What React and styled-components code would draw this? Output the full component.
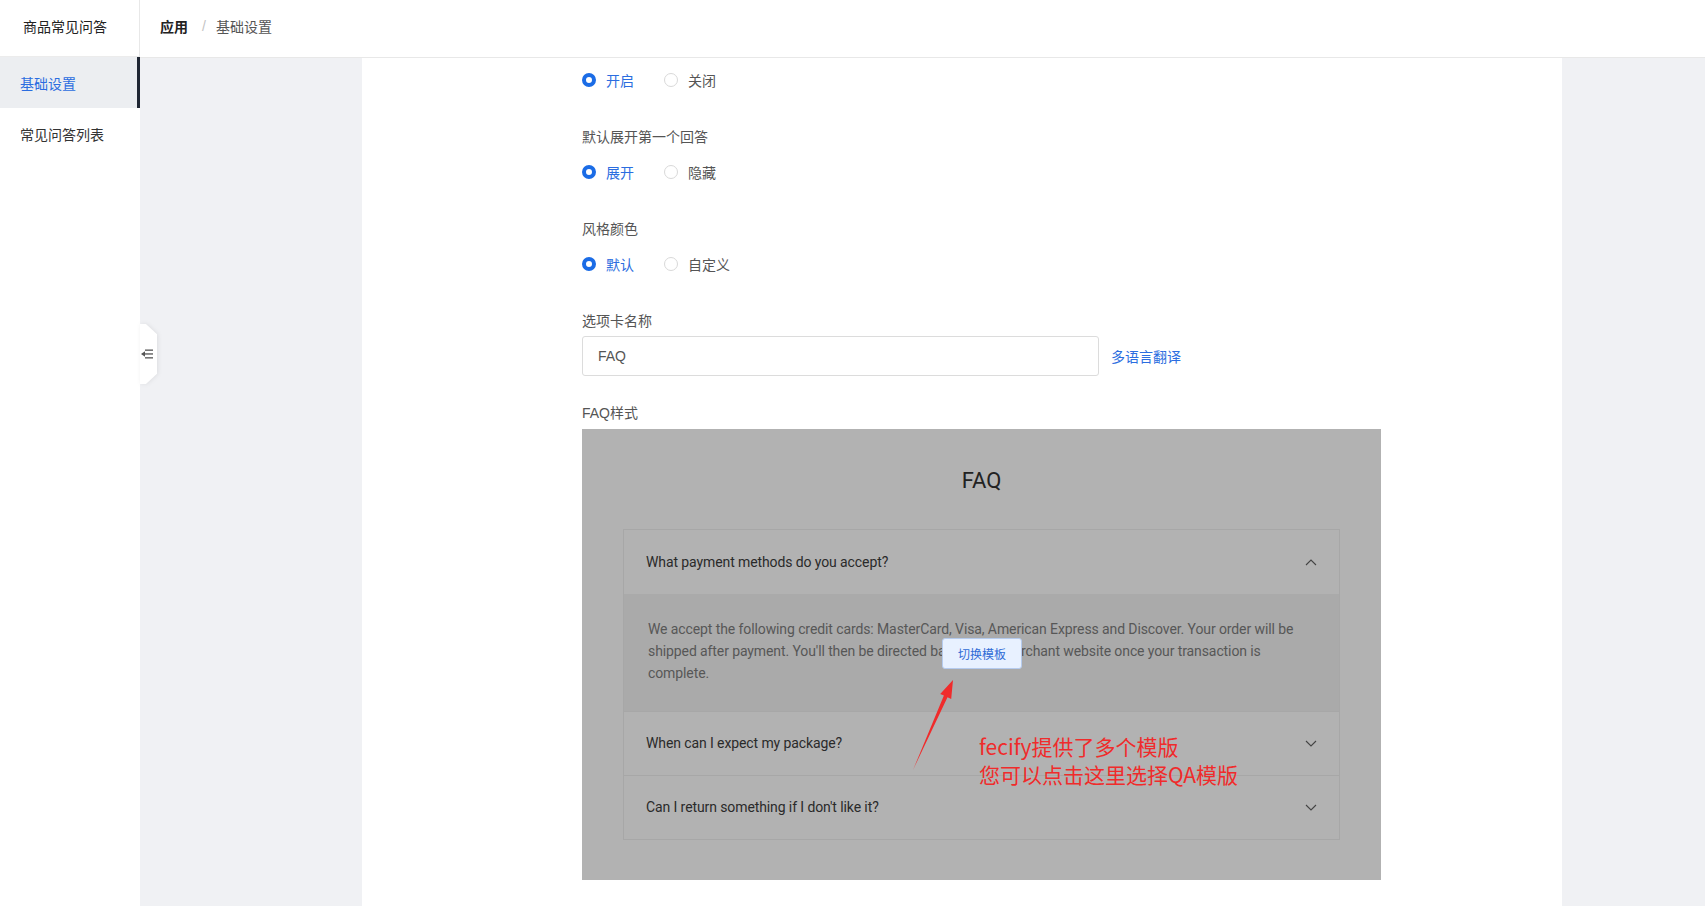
import React from "react";
import styled, { createGlobalStyle } from "styled-components";

const Global = createGlobalStyle`
  html, body { margin: 0; padding: 0; height: 100%; }
  body {
    font-family: "Liberation Sans", "Noto Sans CJK SC", sans-serif;
    background: #f0f1f4;
    color: #333;
    overflow: hidden;
  }
  #root { height: 100%; }
`;

const Page = styled.div`
  display: flex;
  width: 1705px;
  height: 906px;
  background: #f0f1f4;
`;

const Sidebar = styled.aside`
  width: 140px;
  flex: none;
  background: #fff;
  display: flex;
  flex-direction: column;
`;

const SideTitle = styled.div`
  height: 57px;
  box-sizing: border-box;
  border-right: 1px solid #e8e8e8;
  border-bottom: 1px solid #ececec;
  display: flex;
  align-items: center;
  padding: 0 0 5px 23px;
  font-size: 14px;
  color: #222;
`;

const MenuItem = styled.div`
  height: 51px;
  box-sizing: border-box;
  display: flex;
  align-items: center;
  padding-left: 20px;
  font-size: 14px;
  color: ${(p) => (p.$active ? "#2b6de0" : "#333")};
  background: ${(p) => (p.$active ? "#eceef1" : "#fff")};
  border-right: 3px solid ${(p) => (p.$active ? "#1f2633" : "transparent")};
`;

const Main = styled.div`
  flex: 1;
  display: flex;
  flex-direction: column;
  position: relative;
  min-width: 0;
`;

const TopBar = styled.header`
  height: 58px;
  box-sizing: border-box;
  background: #fff;
  border-bottom: 1px solid #e8e8e8;
  display: flex;
  align-items: center;
  padding: 0 0 5px 20px;
  font-size: 14px;
  flex: none;
`;

const Crumb = styled.span`
  color: ${(p) => (p.$strong ? "#222" : "#555")};
  font-weight: ${(p) => (p.$strong ? 700 : 400)};
`;

const Sep = styled.span`
  color: #c4c4c4;
  margin: 0 10px 0 14px;
`;

const Body = styled.div`
  flex: 1;
  display: flex;
  padding-left: 222px;
  min-height: 0;
`;

const Panel = styled.section`
  width: 1200px;
  background: #fff;
  box-sizing: border-box;
  padding: 2px 0 0 220px;
  display: flex;
  flex-direction: column;
`;

const Field = styled.div`
  display: flex;
  flex-direction: column;
  margin-bottom: 27px;
`;

const Label = styled.div`
  height: 20px;
  line-height: 20px;
  font-size: 14px;
  color: #555;
  margin-bottom: ${(p) => (p.$gap ? p.$gap : 5)}px;
`;

const RadioRow = styled.div`
  height: 40px;
  display: flex;
  align-items: center;
`;

const RadioOption = styled.label`
  display: flex;
  align-items: center;
  gap: 10px;
  margin-right: 30px;
  font-size: 14px;
  color: ${(p) => (p.$checked ? "#2b6de0" : "#555")};
`;

const RadioDot = styled.span`
  width: 14px;
  height: 14px;
  box-sizing: border-box;
  border-radius: 50%;
  border: ${(p) => (p.$checked ? "4.5px solid #1b6ce6" : "1px solid #d9d9d9")};
  background: #fff;
`;

const InputRow = styled.div`
  display: flex;
  align-items: center;
  gap: 12px;
`;

const TextInput = styled.div`
  width: 517px;
  height: 40px;
  box-sizing: border-box;
  border: 1px solid #dcdcdc;
  border-radius: 3px;
  display: flex;
  align-items: center;
  padding-left: 15px;
  font-size: 14px;
  color: #555;
`;

const LinkText = styled.span`
  font-size: 14px;
  color: #2b6de0;
`;

const Preview = styled.div`
  position: relative;
  width: 799px;
  height: 451px;
  box-sizing: border-box;
  background: #b2b2b2;
  padding: 0 41px;
  font-family: Roboto, "Noto Sans CJK SC", sans-serif;
`;

const PreviewTitle = styled.div`
  text-align: center;
  font-size: 22px;
  line-height: 30px;
  color: #222;
  padding: 37px 0 33px;
`;

const Accordion = styled.div`
  border: 1px solid #a7a7a7;
`;

const QRow = styled.div`
  height: 64px;
  box-sizing: border-box;
  border-top: ${(p) => (p.$first ? "none" : "1px solid #a7a7a7")};
  display: flex;
  align-items: center;
  justify-content: space-between;
  padding: 0 22px 0 22px;
  font-size: 14px;
  color: #2a2a2a;
  letter-spacing: -0.1px;
`;

const Answer = styled.div`
  background: #aaaaaa;
  padding: 24px 32px 26px 24px;
  font-size: 14px;
  line-height: 22.2px;
  color: #575757;
  letter-spacing: -0.1px;
`;

const SwitchBtn = styled.div`
  position: absolute;
  left: 360px;
  top: 209px;
  width: 80px;
  height: 31px;
  box-sizing: border-box;
  background: #e8f1ff;
  border: 1px solid #b5cbee;
  border-radius: 3px;
  display: flex;
  align-items: center;
  justify-content: center;
  font-size: 12px;
  color: #2f6bd6;
  font-family: "Noto Sans CJK SC", sans-serif;
`;

const Annotation = styled.div`
  position: absolute;
  left: 397px;
  top: 303px;
  font-size: 21px;
  line-height: 28px;
  color: #f02b2b;
  font-family: "Noto Sans CJK SC", sans-serif;
  white-space: nowrap;
`;

const ArrowSvg = styled.svg`
  position: absolute;
  left: 0;
  top: 0;
  pointer-events: none;
`;

const CollapseWrap = styled.div`
  position: absolute;
  left: 0;
  top: 324px;
  filter: drop-shadow(1px 0 2px rgba(0, 0, 0, 0.08));
`;

const CollapseTab = styled.div`
  width: 17px;
  height: 60px;
  background: #fff;
  clip-path: polygon(0 0, 35% 0, 100% 17%, 100% 83%, 35% 100%, 0 100%);
  display: flex;
  align-items: center;
  justify-content: center;
  padding-right: 4px;
  box-sizing: border-box;
`;

const Chevron = ({ up }) => (
  <svg width="12" height="7" viewBox="0 0 12 7">
    <polyline
      points={up ? "1,6 6,1 11,6" : "1,1 6,6 11,1"}
      fill="none"
      stroke="#444"
      strokeWidth="1.1"
    />
  </svg>
);

const Radio = ({ checked, children }) => (
  <RadioOption $checked={checked}>
    <RadioDot $checked={checked} />
    {children}
  </RadioOption>
);

export default function App() {
  return (
    <>
      <Global />
      <Page>
        <Sidebar>
          <SideTitle>商品常见问答</SideTitle>
          <MenuItem $active>基础设置</MenuItem>
          <MenuItem>常见问答列表</MenuItem>
        </Sidebar>
        <Main>
          <TopBar>
            <Crumb $strong>应用</Crumb>
            <Sep>/</Sep>
            <Crumb>基础设置</Crumb>
          </TopBar>
          <Body>
            <Panel>
              <Field>
                <RadioRow>
                  <Radio checked>开启</Radio>
                  <Radio>关闭</Radio>
                </RadioRow>
              </Field>
              <Field>
                <Label>默认展开第一个回答</Label>
                <RadioRow>
                  <Radio checked>展开</Radio>
                  <Radio>隐藏</Radio>
                </RadioRow>
              </Field>
              <Field>
                <Label>风格颜色</Label>
                <RadioRow>
                  <Radio checked>默认</Radio>
                  <Radio>自定义</Radio>
                </RadioRow>
              </Field>
              <Field>
                <Label>选项卡名称</Label>
                <InputRow>
                  <TextInput>FAQ</TextInput>
                  <LinkText>多语言翻译</LinkText>
                </InputRow>
              </Field>
              <Field>
                <Label $gap={6}>FAQ样式</Label>
                <Preview>
                  <PreviewTitle>FAQ</PreviewTitle>
                  <Accordion>
                    <QRow $first>
                      <span>What payment methods do you accept?</span>
                      <Chevron up />
                    </QRow>
                    <Answer>
                      We accept the following credit cards: MasterCard, Visa, American Express and
                      Discover. Your order will be shipped after payment. You'll then be directed
                      back to the merchant website once your transaction is complete.
                    </Answer>
                    <QRow>
                      <span>When can I expect my package?</span>
                      <Chevron />
                    </QRow>
                    <QRow>
                      <span>Can I return something if I don't like it?</span>
                      <Chevron />
                    </QRow>
                  </Accordion>
                  <SwitchBtn>切换模板</SwitchBtn>
                  <ArrowSvg width="799" height="451" viewBox="0 0 799 451">
                    <polygon
                      points="331,341 365.5,268.3 369.2,269.9 371,251 358.2,265.0 361.9,266.6"
                      fill="#f02b2b"
                    />
                  </ArrowSvg>
                  <Annotation>
                    fecify提供了多个模版
                    <br />
                    您可以点击这里选择QA模版
                  </Annotation>
                </Preview>
              </Field>
            </Panel>
          </Body>
          <CollapseWrap>
            <CollapseTab>
              <svg width="12" height="10" viewBox="0 0 12 10">
                <polygon points="0,5 4,2.2 4,7.8" fill="#555" />
                <rect x="4" y="0.5" width="8" height="1.3" fill="#555" />
                <rect x="4" y="4.3" width="8" height="1.3" fill="#555" />
                <rect x="4" y="8.2" width="8" height="1.3" fill="#555" />
              </svg>
            </CollapseTab>
          </CollapseWrap>
        </Main>
      </Page>
    </>
  );
}
